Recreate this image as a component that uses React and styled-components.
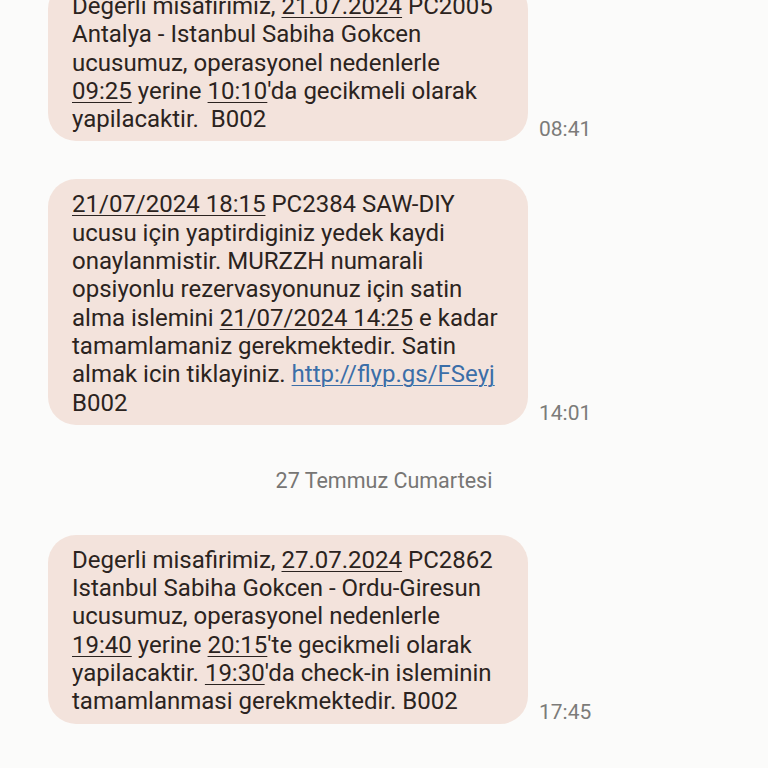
import React from "react";
import styled, { createGlobalStyle } from "styled-components";

const GlobalStyle = createGlobalStyle`
  html, body {
    margin: 0;
    padding: 0;
    background: #fbfbfa;
    overflow: hidden;
  }
  body {
    font-family: Roboto, "Noto Sans", sans-serif;
  }
`;

const Thread = styled.div`
  display: flex;
  flex-direction: column;
  padding: 0 0 0 48px;
  margin-top: -19px;
  height: 787px;
`;

const Row = styled.div`
  display: flex;
  align-items: flex-end;
  gap: 11px;
  margin-top: ${(p) => p.$gap || 0}px;
`;

const Bubble = styled.div`
  width: 480px;
  box-sizing: border-box;
  background: #f3e3dc;
  border-radius: 28px;
  padding: 11px 16px 8px 24px;
  color: #2b2320;
  font-size: 24px;
  line-height: 28.3px;
  white-space: nowrap;
`;

const Time = styled.div`
  color: #7c7b79;
  font-size: 21px;
  line-height: 24px;
  padding-bottom: 0;
`;

const U = styled.span`
  text-decoration: underline;
  text-decoration-thickness: 1px;
  text-underline-offset: 3px;
`;

const Link = styled.a`
  color: #3b6ea8;
  text-decoration: underline;
  text-decoration-thickness: 1px;
  text-underline-offset: 3px;
`;

const Divider = styled.div`
  text-align: center;
  color: #777674;
  font-size: 21.5px;
  line-height: 24px;
  padding-right: 48px;
  margin: 44px 0 42px;
`;

export default function App() {
  return (
    <>
      <GlobalStyle />
      <Thread>
        <Row>
          <Bubble>
            Degerli misafirimiz, <U>21.07.2024</U> PC2005
            <br />
            Antalya - Istanbul Sabiha Gokcen
            <br />
            ucusumuz, operasyonel nedenlerle
            <br />
            <U>09:25</U> yerine <U>10:10</U>'da gecikmeli olarak
            <br />
            yapilacaktir.&nbsp; B002
          </Bubble>
          <Time>08:41</Time>
        </Row>
        <Row $gap={38}>
          <Bubble>
            <U>21/07/2024 18:15</U> PC2384 SAW-DIY
            <br />
            ucusu için yaptirdiginiz yedek kaydi
            <br />
            onaylanmistir. MURZZH numarali
            <br />
            opsiyonlu rezervasyonunuz için satin
            <br />
            alma islemini <U>21/07/2024 14:25</U> e kadar
            <br />
            tamamlamaniz gerekmektedir. Satin
            <br />
            almak icin tiklayiniz. <Link href="#">http://flyp.gs/FSeyj</Link>
            <br />
            B002
          </Bubble>
          <Time>14:01</Time>
        </Row>
        <Divider>27 Temmuz Cumartesi</Divider>
        <Row>
          <Bubble>
            Degerli misafirimiz, <U>27.07.2024</U> PC2862
            <br />
            Istanbul Sabiha Gokcen - Ordu-Giresun
            <br />
            ucusumuz, operasyonel nedenlerle
            <br />
            <U>19:40</U> yerine <U>20:15</U>'te gecikmeli olarak
            <br />
            yapilacaktir. <U>19:30</U>'da check-in isleminin
            <br />
            tamamlanmasi gerekmektedir. B002
          </Bubble>
          <Time>17:45</Time>
        </Row>
      </Thread>
    </>
  );
}
